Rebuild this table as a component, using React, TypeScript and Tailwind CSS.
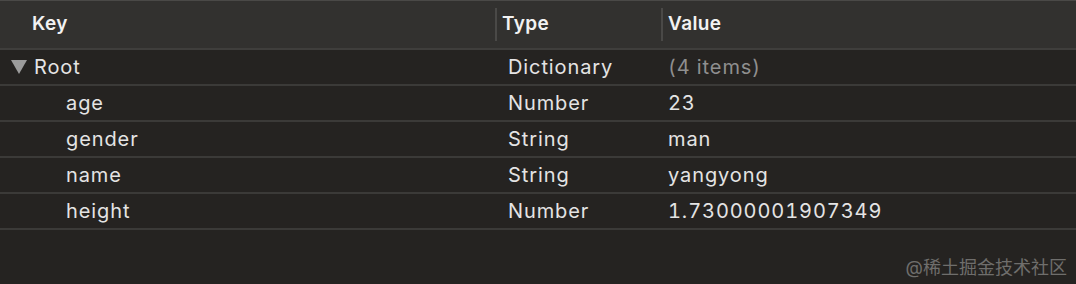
import React from "react";

const rows = [
  { key: "age", type: "Number", value: "23" },
  { key: "gender", type: "String", value: "man" },
  { key: "name", type: "String", value: "yangyong" },
  { key: "height", type: "Number", value: "1.73000001907349" },
];

const font = { fontFamily: "Inter, 'Noto Sans CJK SC', sans-serif" };

const Row = ({ k, type, value, root }: { k: string; type: string; value: string; root?: boolean }) => (
  <div className="flex h-[36px] border-b-2 border-[#3b3a38] text-[20px] tracking-[0.9px] text-[#e4e4e4]">
    <div className="flex w-[508px] items-center">
      {root ? (
        <div className="flex items-center">
          <svg width="16" height="14" viewBox="0 0 16 14" className="ml-[11px] mr-[7px]">
            <polygon points="0,0 16,0 8,14" fill="#9c9c9c" />
          </svg>
          <span>{k}</span>
        </div>
      ) : (
        <span className="pl-[66px]">{k}</span>
      )}
    </div>
    <div className="flex w-[160px] items-center">{type}</div>
    <div className={`flex items-center tabular-nums ${root ? "text-[#8f8f8f]" : ""}`}>{value}</div>
  </div>
);

export default function App() {
  return (
    <div className="h-[284px] w-[1076px] overflow-hidden bg-[#252321]" style={font}>
      <div className="flex h-[50px] border-t border-[#4a4947] border-b-2 border-b-[#3f3e3c] bg-[#32312f] text-[19px] font-semibold tracking-[0.4px] text-[#f2f2f2]">
        <div className="flex w-[495px] items-center pl-[32px]">Key</div>
        <div className="my-[7px] w-[2px] bg-[#4a4947]" />
        <div className="flex w-[164px] items-center pl-[5px]">Type</div>
        <div className="my-[7px] w-[2px] bg-[#4a4947]" />
        <div className="flex items-center pl-[5px]">Value</div>
      </div>
      <Row k="Root" type="Dictionary" value="(4 items)" root />
      {rows.map((r) => (
        <Row key={r.key} k={r.key} type={r.type} value={r.value} />
      ))}
      <div className="flex justify-end pr-[9px] pt-[24px] text-[18px] text-[#6f6e6c]">
        @稀土掘金技术社区
      </div>
    </div>
  );
}
